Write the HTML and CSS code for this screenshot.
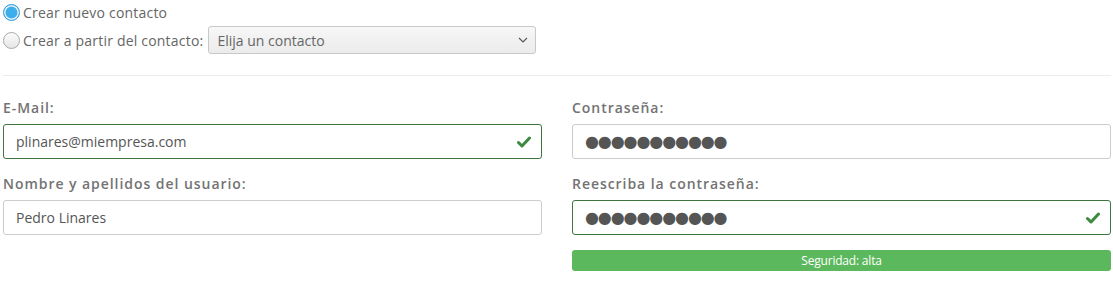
FILE: index.html
```html
<!DOCTYPE html>
<html lang="es">
<head>
<meta charset="utf-8">
<title>Nuevo usuario</title>
<link rel="stylesheet" href="styles.css">
</head>
<body>
<div class="source">
  <label class="radio-row">
    <span class="radio checked"></span>
    <span class="radio-text">Crear nuevo contacto</span>
  </label>
  <label class="radio-row">
    <span class="radio"></span>
    <span class="radio-text">Crear a partir del contacto:</span>
    <span class="select">
      <span class="select-text">Elija un contacto</span>
      <svg class="chev" width="10" height="6" viewBox="0 0 10 6"><path d="M1 1 L5 5 L9 1" fill="none" stroke="#555" stroke-width="1.1"/></svg>
    </span>
  </label>
</div>
<div class="sep"></div>
<div class="form">
  <div class="col">
    <div class="group">
      <div class="label">E-Mail:</div>
      <div class="field ok"><span class="value">plinares@miempresa.com</span>
        <svg class="check" width="14" height="12" viewBox="0 0 14 12"><path d="M1.5 6.5 L5 10 L12.5 2" fill="none" stroke="#3c8a3f" stroke-width="3" stroke-linecap="round" stroke-linejoin="round"/></svg>
      </div>
    </div>
    <div class="group">
      <div class="label">Nombre y apellidos del usuario:</div>
      <div class="field"><span class="value">Pedro Linares</span></div>
    </div>
  </div>
  <div class="col">
    <div class="group">
      <div class="label">Contraseña:</div>
      <div class="field"><span class="dots">●●●●●●●●●●●</span></div>
    </div>
    <div class="group">
      <div class="label">Reescriba la contraseña:</div>
      <div class="field ok"><span class="dots">●●●●●●●●●●●</span>
        <svg class="check" width="14" height="12" viewBox="0 0 14 12"><path d="M1.5 6.5 L5 10 L12.5 2" fill="none" stroke="#3c8a3f" stroke-width="3" stroke-linecap="round" stroke-linejoin="round"/></svg>
      </div>
    </div>
    <div class="progress"><div class="bar">Seguridad: alta</div></div>
  </div>
</div>
</body>
</html>
```
FILE: styles.css
```css
html, body {
  margin: 0;
  background: #fff;
}
body {
  padding: 3px 2px 0 3px;
  font-family: "Open Sans", "Noto Sans", sans-serif;
  font-size: 14px;
  color: #555;
}
.source {
  display: flex;
  flex-direction: column;
  gap: 4px;
}
.radio-row {
  display: flex;
  align-items: center;
  gap: 3px;
  min-height: 18px;
}
.radio {
  width: 15px;
  height: 15px;
  border-radius: 50%;
  border: 1px solid #a8a8a8;
  background: linear-gradient(#fbfbfb, #e6e6e6);
  flex: none;
}
.radio.checked {
  border-color: #3d9fde;
  background: #3daee9;
  box-shadow: inset 0 0 0 1.5px #e8f4fb;
}
.radio-text {
  color: #666;
  letter-spacing: 0.2px;
}
.select {
  display: flex;
  align-items: center;
  justify-content: space-between;
  width: 328px;
  height: 28px;
  box-sizing: border-box;
  margin-left: 2px;
  padding: 0 7px 0 8px;
  border: 1px solid #c8c8c8;
  border-radius: 3px;
  background: linear-gradient(#f7f7f7, #ebebeb);
  color: #666;
}
.sep {
  height: 1px;
  background: #ececec;
  margin: 21px 0 22px;
}
.form {
  display: grid;
  grid-template-columns: 539px 539px;
  column-gap: 30px;
}
.group {
  margin-bottom: 15px;
}
.label {
  font-weight: 600;
  color: #737373;
  letter-spacing: 0.95px;
  line-height: 20px;
  margin-bottom: 6px;
}
.field {
  display: flex;
  align-items: center;
  justify-content: space-between;
  height: 35px;
  box-sizing: border-box;
  padding: 0 10px 0 12px;
  border: 1px solid #ccc;
  border-radius: 3px;
  color: #555;
}
.field.ok {
  border-color: #3c763d;
}
.dots {
  font-family: "DejaVu Sans", sans-serif;
  font-size: 16px;
  color: #555;
  letter-spacing: -1.1px;
}
.progress {
  height: 21px;
  border-radius: 3px;
  background: #f5f5f5;
  overflow: hidden;
}
.bar {
  height: 100%;
  width: 100%;
  background: #5cb85c;
  color: #fff;
  font-size: 12px;
  line-height: 21px;
  text-align: center;
  letter-spacing: -0.2px;
}
```
